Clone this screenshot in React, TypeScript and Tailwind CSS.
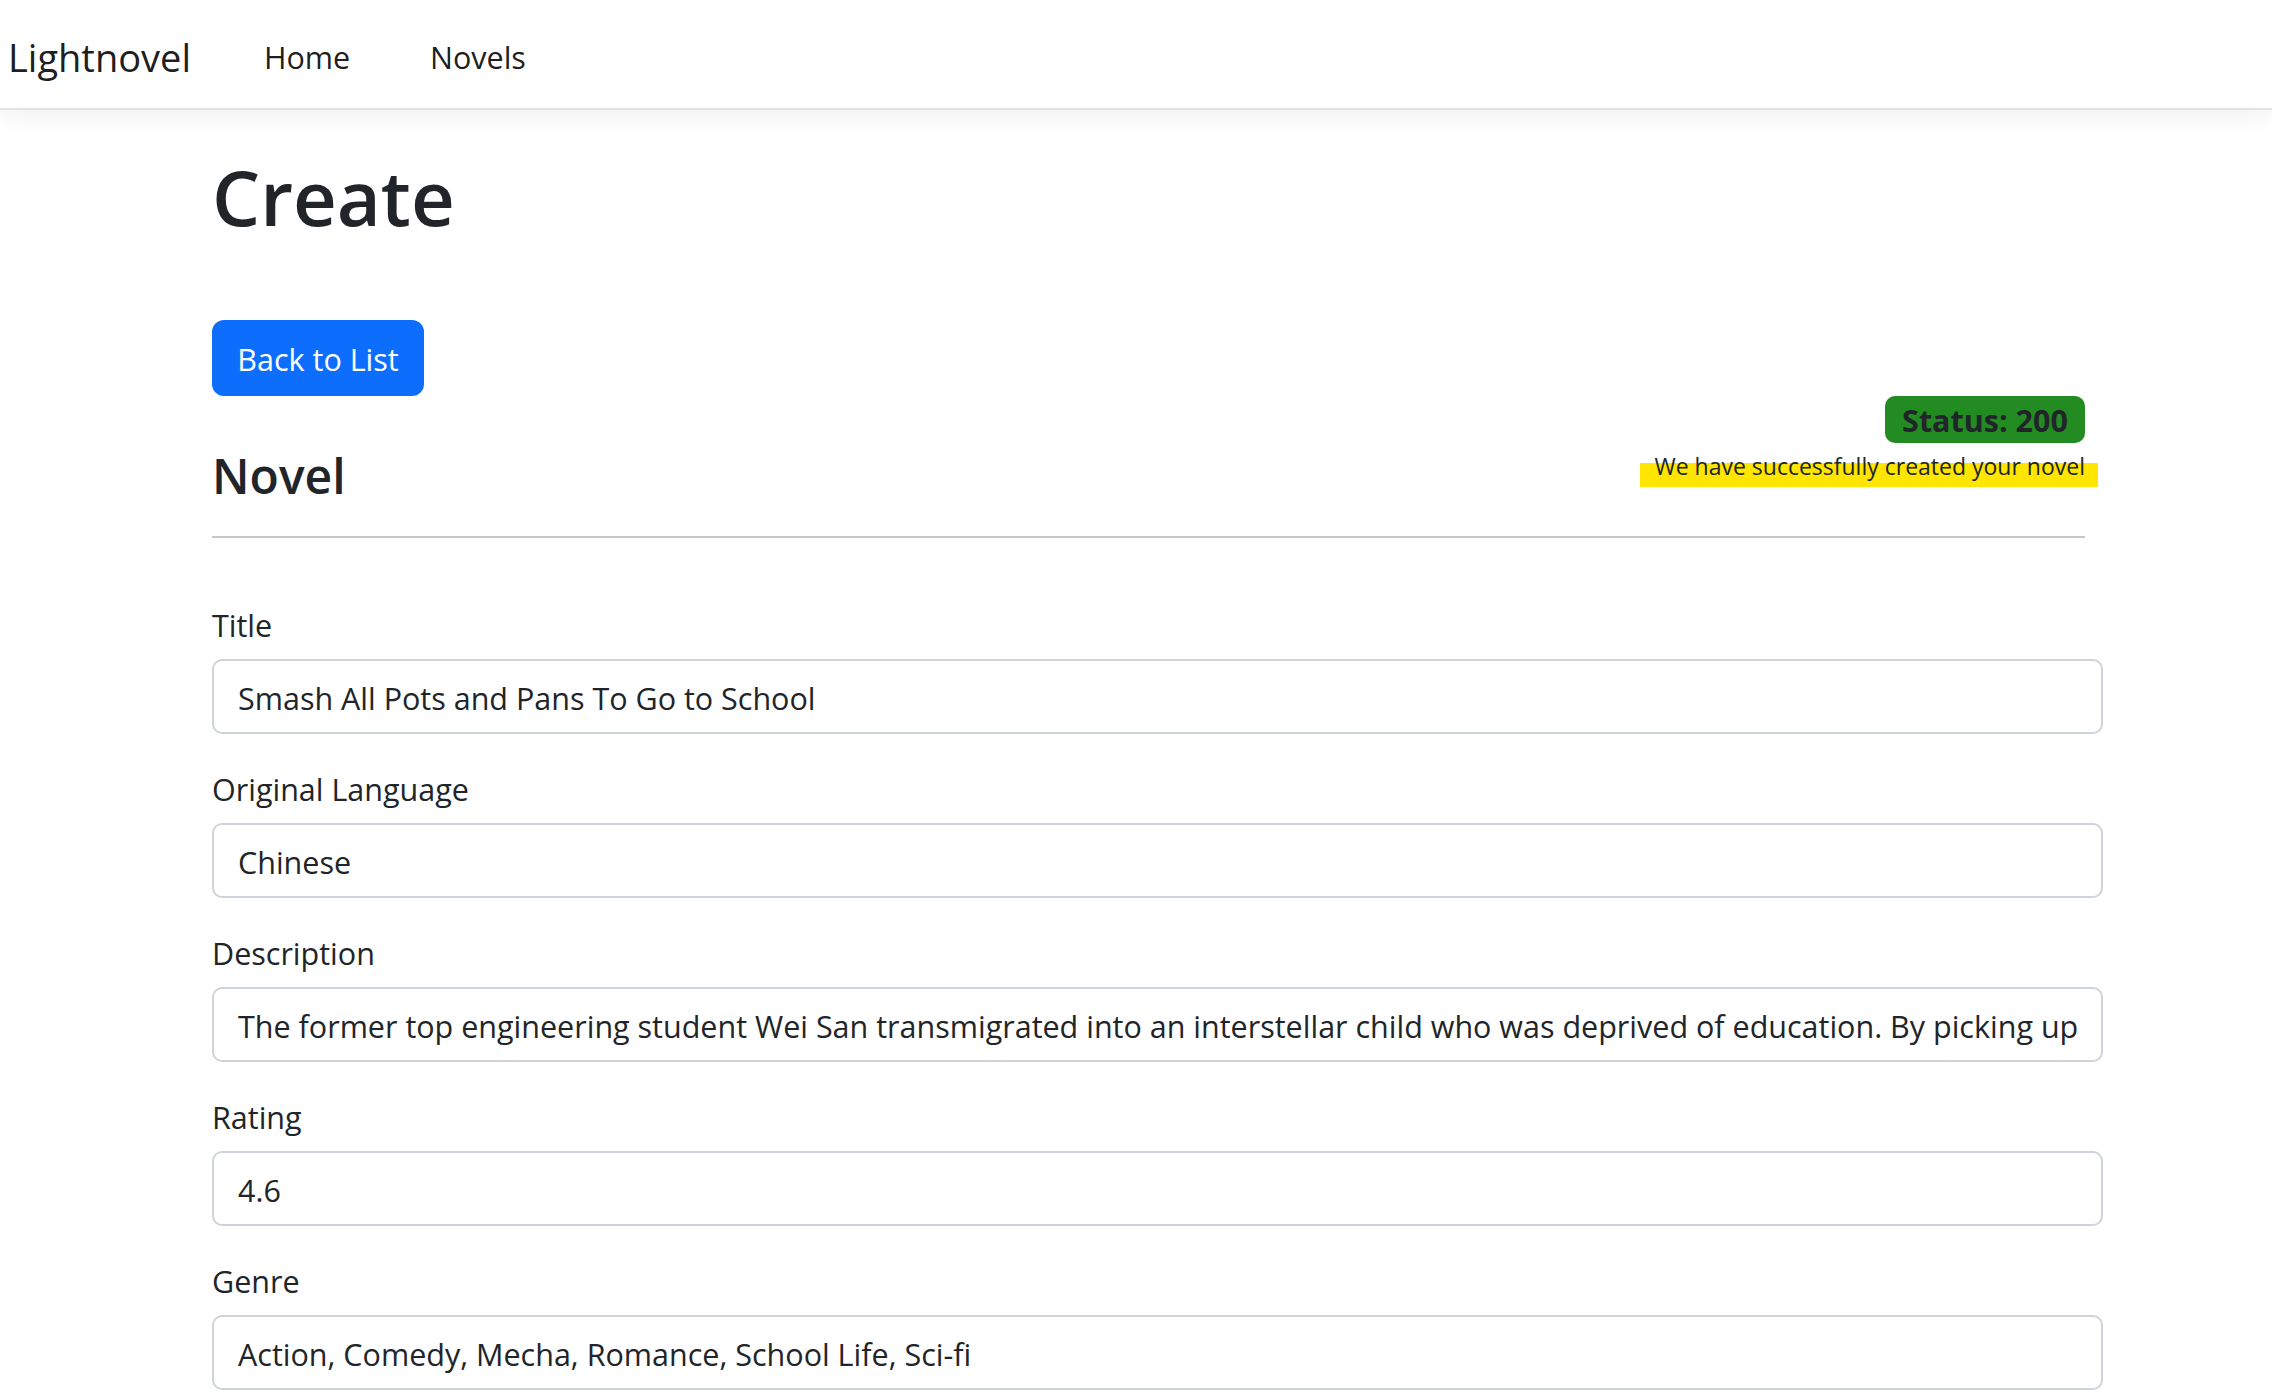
const fields = [
  { label: "Title", value: "Smash All Pots and Pans To Go to School" },
  { label: "Original Language", value: "Chinese" },
  {
    label: "Description",
    value:
      "The former top engineering student Wei San transmigrated into an interstellar child who was deprived of education. By picking up",
  },
  { label: "Rating", value: "4.6" },
  { label: "Genre", value: "Action, Comedy, Mecha, Romance, School Life, Sci-fi" },
];

function Navbar() {
  return (
    <nav className="flex h-[110px] items-center border-b-2 border-[#e2e3e5] bg-white pt-[6px] shadow-[0_8px_24px_rgba(0,0,0,0.05)]">
      <a className="w-[264px] pl-[8px] text-[38px] leading-[48px] text-black/90">Lightnovel</a>
      <ul className="flex text-[30.5px] leading-[46px] text-black/90">
        <li className="w-[166px]">Home</li>
        <li>Novels</li>
      </ul>
    </nav>
  );
}

function Field({ label, value }: { label: string; value: string }) {
  return (
    <div className="mb-[32px]">
      <label className="mb-[11px] block text-[30.5px] leading-[46px] text-[#212529]">{label}</label>
      <input
        readOnly
        value={value}
        className="block h-[75px] w-full rounded-[10px] border-2 border-[#ced4da] bg-white px-6 pt-[2px] text-[30.5px] text-[#212529] outline-none"
      />
    </div>
  );
}

export default function App() {
  return (
    <div className="min-h-screen bg-white font-['Open_Sans',sans-serif] text-[#212529]">
      <Navbar />
      <main className="ml-[212px] w-[1891px]">
        <h1 className="mt-[40px] text-[76px] font-semibold leading-[94px]">Create</h1>
        <a className="mt-[76px] flex h-[76px] w-[212px] items-center justify-center rounded-[12px] bg-[#0d6efd] pt-[4px] text-[30.5px] text-white">
          Back to List
        </a>

        <div className="flex w-[1873px] items-start justify-between">
          <h3 className="mt-[50px] text-[48px] font-semibold leading-[60px]">Novel</h3>
          <div className="flex flex-col items-end">
            <span className="flex h-[47px] w-[200px] items-center justify-center rounded-[10px] bg-[#228b22] pt-[3px] text-[30.5px] font-bold text-[#212529]">
              Status: 200
            </span>
            <div className="relative mt-[7px] text-[23px] leading-[32px]">
              <span className="absolute -left-[14px] -right-[13px] top-[13px] -bottom-[5px] bg-[#ffe500]" />
              <span className="relative">We have successfully created your novel</span>
            </div>
          </div>
        </div>
        <hr className="mt-[30px] h-[2px] w-[1873px] border-0 bg-[#c7c8c9]" />

        <form className="mt-[64px]">
          {fields.map((f) => (
            <Field key={f.label} label={f.label} value={f.value} />
          ))}
        </form>
      </main>
    </div>
  );
}
